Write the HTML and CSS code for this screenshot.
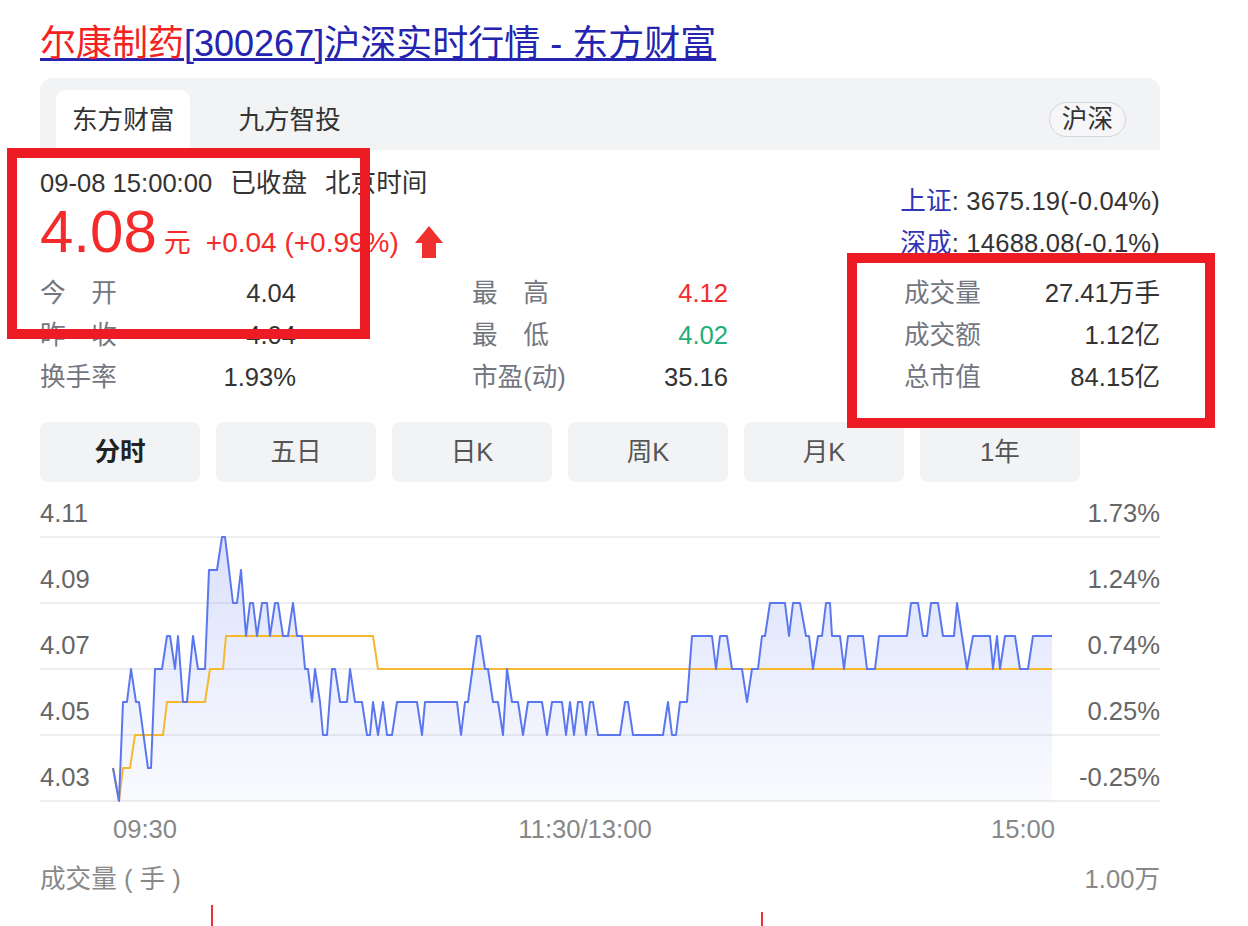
FILE: index.html
```html
<!DOCTYPE html>
<html>
<head>
  <meta charset="UTF-8">
  <title>尔康制药[300267]沪深实时行情 - 东方财富</title>
  <link rel="stylesheet" href="styles.css">
</head>
<body>
  <div class="page">
    <h3 class="result-title"><a href="#"><em>尔康制药</em>[300267]沪深实时行情 - 东方财富</a></h3>

    <div class="quote-card">
      <div class="source-tabs">
        <span class="source-tab active">东方财富</span>
        <span class="source-tab">九方智投</span>
        <span class="market-pill">沪深</span>
      </div>

      <div class="quote-top">
        <div class="quote-main">
          <div class="quote-time">
            <span>09-08 15:00:00</span>
            <span>已收盘</span>
            <span>北京时间</span>
          </div>
          <div class="quote-price">
            <span class="price">4.08</span>
            <span class="unit">元</span>
            <span class="change">+0.04 (+0.99%)</span>
            <svg class="up-arrow" width="28" height="32" viewBox="0 0 28 32">
              <polygon points="14,0 28,17 21,17 21,32 7,32 7,17 0,17" fill="#f0302e"/>
            </svg>
          </div>
        </div>
        <div class="index-list">
          <div><a href="#">上证</a>: 3675.19(-0.04%)</div>
          <div><a href="#">深成</a>: 14688.08(-0.1%)</div>
        </div>
      </div>

      <div class="stats">
        <div class="stat"><span class="label">今　开</span><span class="val">4.04</span></div>
        <div class="stat"><span class="label">最　高</span><span class="val up">4.12</span></div>
        <div class="stat"><span class="label">成交量</span><span class="val">27.41万手</span></div>
        <div class="stat"><span class="label">昨　收</span><span class="val">4.04</span></div>
        <div class="stat"><span class="label">最　低</span><span class="val down">4.02</span></div>
        <div class="stat"><span class="label">成交额</span><span class="val">1.12亿</span></div>
        <div class="stat"><span class="label">换手率</span><span class="val">1.93%</span></div>
        <div class="stat"><span class="label">市盈(动)</span><span class="val">35.16</span></div>
        <div class="stat"><span class="label">总市值</span><span class="val">84.15亿</span></div>
      </div>

      <div class="period-tabs">
        <span class="period active">分时</span>
        <span class="period">五日</span>
        <span class="period">日K</span>
        <span class="period">周K</span>
        <span class="period">月K</span>
        <span class="period">1年</span>
      </div>

      <svg class="chart" width="1120" height="364" viewBox="0 0 1120 364">
        <defs>
          <linearGradient id="area" x1="0" y1="42" x2="0" y2="306" gradientUnits="userSpaceOnUse">
            <stop offset="0" stop-color="#5b77f0" stop-opacity="0.22"/>
            <stop offset="1" stop-color="#5b77f0" stop-opacity="0.03"/>
          </linearGradient>
        </defs>
        <g class="grid">
          <line x1="0" y1="42" x2="1120" y2="42"/>
          <line x1="0" y1="108" x2="1120" y2="108"/>
          <line x1="0" y1="174" x2="1120" y2="174"/>
          <line x1="0" y1="240" x2="1120" y2="240"/>
          <line x1="0" y1="306" x2="1120" y2="306"/>
        </g>
        <polygon fill="url(#area)" points="73,273 79,306 83,207 87,207 91,174 96,207 99,207 108,273 111,273 115,174 122,174 127,141 130,141 135,174 138,141 143,207 147,207 153,141 158,174 165,174 169,75 177,75 182,42 185,42 193,108 197,108 201,75 206,141 210,108 213,108 217,141 222,108 227,108 230,141 235,108 238,108 243,141 248,141 253,108 257,141 262,141 265,174 268,174 272,207 275,174 280,207 283,240 287,240 292,174 295,174 300,207 307,207 310,174 315,207 322,207 327,240 330,240 333,207 338,240 343,207 347,240 352,240 357,207 377,207 382,240 385,207 417,207 421,240 425,207 428,207 437,141 440,141 445,174 448,174 453,207 458,207 463,240 467,174 472,207 478,207 483,240 488,207 502,207 507,240 512,207 522,207 526,240 530,207 534,240 538,207 542,207 546,240 550,207 553,207 558,240 580,240 585,207 588,207 593,240 623,240 628,207 632,240 636,240 640,207 647,207 652,141 672,141 676,174 680,141 687,141 692,174 702,174 707,207 712,174 718,174 722,141 725,141 730,108 745,108 749,141 753,108 760,108 766,141 769,141 773,174 778,141 782,141 786,108 790,108 792,141 800,141 804,174 808,141 823,141 827,174 835,174 839,141 867,141 871,108 878,108 883,141 887,141 891,108 898,108 903,141 914,141 917,108 927,174 933,141 950,141 953,174 957,141 960,174 965,141 975,141 980,174 988,174 993,141 1012,141 1012,306 73,306"/>
        <polyline class="avg-line" points="73,273 79,306 83,273 90,273 95,240 123,240 127,207 165,207 170,174 183,174 186,141 333,141 338,174 1012,174"/>
        <polyline class="price-line" points="73,273 79,306 83,207 87,207 91,174 96,207 99,207 108,273 111,273 115,174 122,174 127,141 130,141 135,174 138,141 143,207 147,207 153,141 158,174 165,174 169,75 177,75 182,42 185,42 193,108 197,108 201,75 206,141 210,108 213,108 217,141 222,108 227,108 230,141 235,108 238,108 243,141 248,141 253,108 257,141 262,141 265,174 268,174 272,207 275,174 280,207 283,240 287,240 292,174 295,174 300,207 307,207 310,174 315,207 322,207 327,240 330,240 333,207 338,240 343,207 347,240 352,240 357,207 377,207 382,240 385,207 417,207 421,240 425,207 428,207 437,141 440,141 445,174 448,174 453,207 458,207 463,240 467,174 472,207 478,207 483,240 488,207 502,207 507,240 512,207 522,207 526,240 530,207 534,240 538,207 542,207 546,240 550,207 553,207 558,240 580,240 585,207 588,207 593,240 623,240 628,207 632,240 636,240 640,207 647,207 652,141 672,141 676,174 680,141 687,141 692,174 702,174 707,207 712,174 718,174 722,141 725,141 730,108 745,108 749,141 753,108 760,108 766,141 769,141 773,174 778,141 782,141 786,108 790,108 792,141 800,141 804,174 808,141 823,141 827,174 835,174 839,141 867,141 871,108 878,108 883,141 887,141 891,108 898,108 903,141 914,141 917,108 927,174 933,141 950,141 953,174 957,141 960,174 965,141 975,141 980,174 988,174 993,141 1012,141"/>
        <g class="axis">
          <text x="0" y="27">4.11</text>
          <text x="0" y="93">4.09</text>
          <text x="0" y="159">4.07</text>
          <text x="0" y="225">4.05</text>
          <text x="0" y="291">4.03</text>
        </g>
        <g class="axis right">
          <text x="1120" y="27">1.73%</text>
          <text x="1120" y="93">1.24%</text>
          <text x="1120" y="159">0.74%</text>
          <text x="1120" y="225">0.25%</text>
          <text x="1120" y="291">-0.25%</text>
        </g>
        <g class="axis middle">
          <text x="105" y="343">09:30</text>
          <text x="545" y="343">11:30/13:00</text>
          <text x="983" y="343">15:00</text>
        </g>
      </svg>

      <div class="volume-head">
        <span>成交量 ( 手 )</span>
        <span>1.00万</span>
      </div>
      <svg class="volume" width="1120" height="60" viewBox="0 0 1120 60">
        <line x1="172" y1="6" x2="172" y2="60"/>
        <line x1="722" y1="13" x2="722" y2="60"/>
      </svg>
    </div>

    <div class="mark mark-price"></div>
    <div class="mark mark-volume"></div>
  </div>
</body>
</html>
```

FILE: styles.css
```css
body {
  margin: 0;
  background-color: white;
  font-family: "Liberation Sans", "Noto Sans CJK SC", sans-serif;
  font-size: 25.6px;
  color: #333;
}
.page {
  position: relative;
  width: 1120px;
  margin-left: 40px;
  padding-top: 22px;
}
.result-title {
  margin: 0;
  font-size: 36px;
  font-weight: normal;
  line-height: 44px;
}
.result-title a {
  color: #2424b0;
  text-decoration: underline;
}
.result-title em {
  font-style: normal;
  color: #f52222;
}
.quote-card {
  margin-top: 12px;
}
.source-tabs {
  display: flex;
  align-items: flex-end;
  height: 72px;
  padding: 0 34px 0 16px;
  background-color: #f2f3f5;
  border-radius: 12px 12px 0 0;
}
.source-tab {
  height: 60px;
  line-height: 60px;
  padding: 0 16px;
  margin-right: 32px;
  color: #333;
}
.source-tab.active {
  background-color: white;
  border-radius: 10px 10px 0 0;
}
.market-pill {
  margin-left: auto;
  margin-bottom: 13px;
  height: 33px;
  line-height: 33px;
  padding: 0 12px;
  border: 1px solid #d3d4d8;
  border-radius: 18px;
  background-color: #f6f6f8;
  color: #333;
}
.quote-top {
  display: flex;
  justify-content: space-between;
  padding-top: 17px;
}
.quote-time {
  display: flex;
  gap: 18px;
  line-height: 32px;
}
.quote-price {
  display: flex;
  align-items: baseline;
  height: 66px;
  color: #f52b2b;
}
.price {
  font-size: 60px;
  line-height: 66px;
}
.unit {
  font-size: 27px;
  margin-left: 7px;
}
.change {
  font-size: 28px;
  margin-left: 15px;
}
.up-arrow {
  align-self: flex-end;
  margin-left: 16px;
  margin-bottom: 7px;
}
.index-list {
  margin-top: 13px;
  line-height: 42px;
  text-align: right;
  letter-spacing: 0.2px;
}
.index-list a {
  color: #3333b5;
  text-decoration: none;
}
.stats {
  display: grid;
  grid-template-columns: repeat(3, 256px);
  column-gap: 176px;
  margin-top: 7px;
  line-height: 42px;
}
.stat {
  display: flex;
  justify-content: space-between;
}
.stat .label {
  color: #73767f;
}
.stat .val {
  color: #333;
}
.stat .val.up {
  color: #f52b2b;
}
.stat .val.down {
  color: #1fae78;
}
.period-tabs {
  display: flex;
  gap: 16px;
  margin-top: 24px;
}
.period {
  width: 160px;
  height: 60px;
  line-height: 60px;
  text-align: center;
  background-color: #f2f3f5;
  border-radius: 8px;
  color: #555;
}
.period.active {
  color: #222;
  font-weight: bold;
}
.chart {
  display: block;
  margin-top: 13px;
}
.grid line {
  stroke: #eeeeee;
  stroke-width: 2;
}
.price-line {
  fill: none;
  stroke: #5b77f0;
  stroke-width: 2;
  stroke-linejoin: round;
}
.avg-line {
  fill: none;
  stroke: #f5b82e;
  stroke-width: 2;
}
.axis text {
  font-family: "Liberation Sans", "Noto Sans CJK SC", sans-serif;
  font-size: 25.6px;
  fill: #666;
}
.axis.right text {
  text-anchor: end;
}
.axis.middle text {
  text-anchor: middle;
  fill: #888;
}
.volume-head {
  display: flex;
  justify-content: space-between;
  line-height: 40px;
  color: #888;
}
.volume {
  display: block;
}
.volume line {
  stroke: #f03030;
  stroke-width: 2;
}
.mark {
  position: absolute;
  border: 10px solid #ed1c24;
  box-sizing: border-box;
}
.mark-price {
  left: -33px;
  top: 148px;
  width: 363px;
  height: 191px;
}
.mark-volume {
  left: 807px;
  top: 253px;
  width: 368px;
  height: 175px;
}
```
